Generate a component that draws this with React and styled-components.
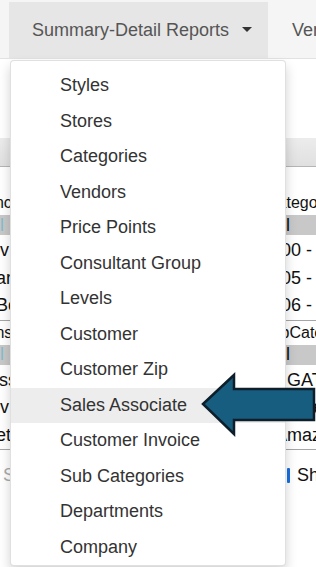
import React from 'react';
import styled, { createGlobalStyle } from 'styled-components';

const GlobalStyle = createGlobalStyle`
  html, body {
    margin: 0;
    padding: 0;
    background: #fff;
    overflow: hidden;
  }
  body {
    font-family: "Liberation Sans", Arial, sans-serif;
    color: #000;
  }
`;

const Page = styled.div`
  position: relative;
  width: 316px;
  height: 567px;
  overflow: hidden;
`;

const Navbar = styled.div`
  display: flex;
  align-items: stretch;
  height: 56px;
  padding: 2px 0 0 9px;
  background: #f5f5f5;
  border-bottom: 1px solid #e2e2e2;
  white-space: nowrap;
`;

const NavItem = styled.div`
  display: flex;
  align-items: center;
  gap: 13px;
  padding: ${(p) => (p.$active ? '0 16px 0 23px' : '0 15px 0 24px')};
  background: ${(p) => (p.$active ? '#e6e6e6' : 'transparent')};
  color: #555;
  font-size: 18px;
`;

const Caret = styled.span`
  width: 0;
  height: 0;
  border-top: 5px solid #333;
  border-left: 5px solid transparent;
  border-right: 5px solid transparent;
  margin-top: -1px;
`;

const Spacer = styled.div`
  height: 79px;
`;

const ToolBand = styled.div`
  height: 28px;
  background: linear-gradient(#ececec, #e0e0e0);
  border-bottom: 1px solid #b5b5b5;
  margin-bottom: 23px;
`;

const GridRow = styled.div`
  display: grid;
  grid-template-columns: 11px 1fr 50px;
  height: ${(p) => p.$h}px;
  background: ${(p) => (p.$filter ? '#c8c8c8' : 'transparent')};
  margin-top: ${(p) => p.$mt || 0}px;
  border-bottom: ${(p) => (p.$line ? '1px solid #a6a6a6' : 'none')};
  font-size: ${(p) => (p.$head ? 16 : 18)}px;
`;

const Cell = styled.div`
  display: flex;
  align-items: center;
  overflow: hidden;
  white-space: nowrap;
  color: ${(p) => p.$color || '#111'};
`;

const CellText = styled.span`
  margin-left: ${(p) => p.$shift || 0}px;
`;

const CheckMark = styled.span`
  flex: none;
  width: 3px;
  height: 15px;
  background: #1a6fe0;
  margin: 0 7px 0 21px;
  border-radius: 1px;
`;

const Menu = styled.div`
  position: absolute;
  top: 60px;
  left: 10px;
  width: 274px;
  padding-top: 7px;
  background: #fff;
  border: 1px solid rgba(0, 0, 0, 0.12);
  border-radius: 4px;
  box-shadow: 0 6px 12px rgba(0, 0, 0, 0.175);
  z-index: 2;
`;

const MenuItem = styled.div`
  padding: 4px 20px 4px 49px;
  line-height: 27.5px;
  font-size: 18px;
  color: #333;
  white-space: nowrap;
  background: ${(p) => (p.$hover ? '#ededed' : 'transparent')};
`;

const ArrowSvg = styled.svg`
  position: absolute;
  left: 196px;
  top: 368px;
  z-index: 3;
`;

const menuItems = [
  'Styles',
  'Stores',
  'Categories',
  'Vendors',
  'Price Points',
  'Consultant Group',
  'Levels',
  'Customer',
  'Customer Zip',
  'Sales Associate',
  'Customer Invoice',
  'Sub Categories',
  'Departments',
  'Company',
];

// left strip fragments, right strip fragments
const rows = [
  { h: 25, head: true, left: ['Branch', -30], right: ['Category', 0] },
  { h: 20, filter: true, left: ['All', -16, '#86bccb'], right: ['All', 4] },
  { h: 27.5, mt: 2, left: ['Dev', -23], right: ['100 - Tops', 5] },
  { h: 27.5, left: ['Car', -17], right: ['105 - Knits', 5] },
  { h: 27.5, line: true, left: ['Box', -4], right: ['106 - Denim', 5] },
  { h: 24, head: true, left: ['Insta', -9], right: ['SubCategory', -5] },
  { h: 20, filter: true, left: ['All', -16, '#86bccb'], right: ['All', 4] },
  { h: 27.5, mt: 2, left: ['Assoc', -13], right: ['GATEWAY', 21] },
  { h: 27.5, left: ['Dev', -23], right: ['Apparel', 10] },
  { h: 27.5, line: true, left: ['Set', -16], right: ['Amazon', 9] },
];

const App = () => {
  return (
    <Page>
      <GlobalStyle />
      <Navbar>
        <NavItem $active>
          Summary-Detail Reports
          <Caret />
        </NavItem>
        <NavItem>Vendor Reports</NavItem>
      </Navbar>
      <Spacer />
      <ToolBand />
      {rows.map((r, i) => (
        <GridRow key={i} $h={r.h} $head={r.head} $filter={r.filter} $mt={r.mt} $line={r.line}>
          <Cell $color={r.left[2]}>
            <CellText $shift={r.left[1]}>{r.left[0]}</CellText>
          </Cell>
          <Cell />
          <Cell>
            <CellText $shift={r.right[1]}>{r.right[0]}</CellText>
          </Cell>
        </GridRow>
      ))}
      <GridRow $h={50}>
        <Cell $color="#aaa">
          <CellText $shift={3}>Show</CellText>
        </Cell>
        <Cell />
        <Cell>
          <CheckMark />
          <CellText>Show</CellText>
        </Cell>
      </GridRow>

      <Menu>
        {menuItems.map((m) => (
          <MenuItem key={m} $hover={m === 'Sales Associate'}>
            {m}
          </MenuItem>
        ))}
      </Menu>

      <ArrowSvg width="122" height="74" viewBox="0 0 122 74">
        <polygon
          points="7,36 38,7 38,21 118,21 118,52 38,52 38,66"
          fill="#175d80"
          stroke="#0c1f2b"
          strokeWidth="2.5"
          strokeLinejoin="miter"
        />
      </ArrowSvg>
    </Page>
  );
};

export default App;
